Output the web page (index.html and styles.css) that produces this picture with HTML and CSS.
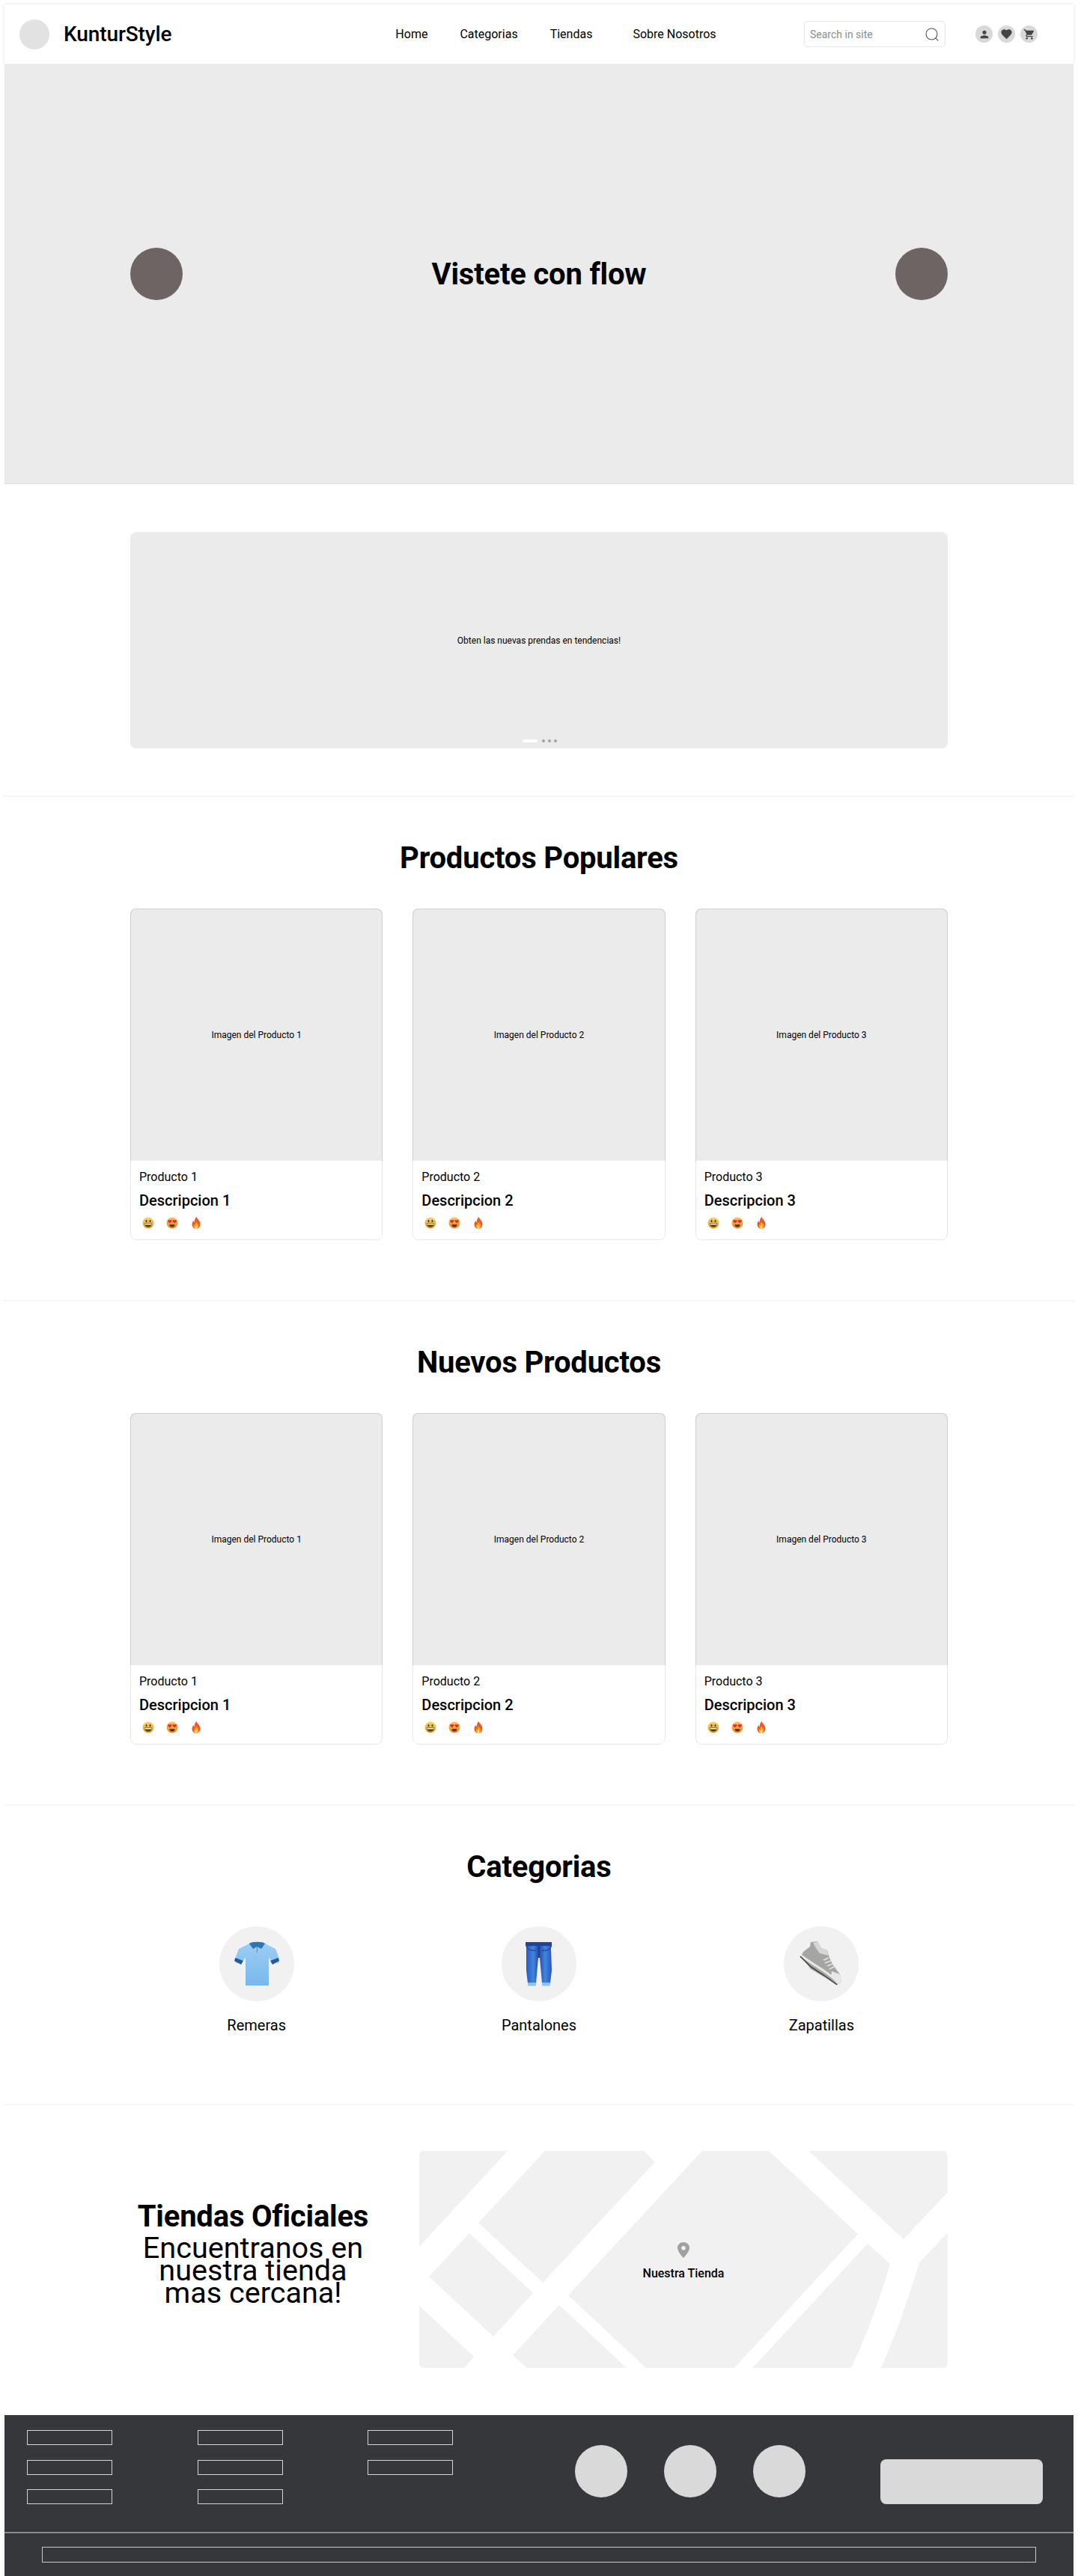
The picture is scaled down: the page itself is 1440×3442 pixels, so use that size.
FILE: index.html
```html
<!DOCTYPE html>
<html lang="es">
<head>
    <meta charset="UTF-8">
    <meta name="viewport" content="width=device-width, initial-scale=1.0">
    <title>KunturStyle</title>
    <link rel="stylesheet" href="styles.css">
</head>
<body>
    <!-- emoji used by the product cards -->
    <svg class="sprites" width="0" height="0" aria-hidden="true">
        <defs>
            <linearGradient id="emojiYellow" x1="0" y1="0" x2="0" y2="1">
                <stop offset="0" stop-color="#f8d568"/>
                <stop offset="1" stop-color="#dc9a25"/>
            </linearGradient>
            <linearGradient id="emojiOrange" x1="0" y1="0" x2="0" y2="1">
                <stop offset="0" stop-color="#f9c850"/>
                <stop offset="1" stop-color="#e5842a"/>
            </linearGradient>
            <symbol id="emojiSmile" viewBox="0 0 16 16">
                <circle cx="8" cy="8" r="7.5" fill="url(#emojiYellow)"/>
                <ellipse cx="5.5" cy="5.6" rx="1" ry="1.6" fill="#4a3210"/>
                <ellipse cx="10.5" cy="5.6" rx="1" ry="1.6" fill="#4a3210"/>
                <path d="M3 8.6h10c0 3-2.2 5-5 5s-5-2-5-5z" fill="#5a3a12"/>
                <path d="M3.6 9h8.8v1.5H3.6z" fill="#fff"/>
            </symbol>
            <symbol id="emojiLove" viewBox="0 0 16 16">
                <circle cx="8" cy="8" r="7.5" fill="url(#emojiOrange)"/>
                <path d="M4.8 8.4L2.4 6.100c-1-1.200.7-2.900 2.400-1.400 1.700-1.500 3.400.2 2.400 1.400z" fill="#e2262b"/>
                <path d="M11.200 8.400L8.800 6.100c-1-1.200.7-2.900 2.400-1.400 1.700-1.500 3.400.2 2.400 1.400z" fill="#e2262b"/>
                <path d="M4.500 10.200h7c0 2-1.500 3.300-3.500 3.300s-3.500-1.300-3.500-3.300z" fill="#5a2a10"/>
            </symbol>
            <symbol id="emojiFire" viewBox="0 0 16 16">
                <path d="M8.500 0c.6 2.800 4.900 4.900 5 9.400C13.500 13 11 16 8 16s-5.500-2.800-5.500-6.200c0-2 1-3.600 2-4.800.1 1.200.5 2 1.200 2.500C5.600 4.800 6.500 1.800 8.500 0z" fill="#ee5a24"/>
                <path d="M8.300 6.500c.3 1.800 3 3 3 5.800 0 2.100-1.500 3.700-3.300 3.700s-3.200-1.500-3.200-3.500c0-1.300.6-2.300 1.300-3 .1.600.4 1 .8 1.200-.2-1.500.3-3.100 1.400-4.200z" fill="#f9a825"/>
                <path d="M8 11c.2 1 1.400 1.500 1.400 2.900 0 1.100-.6 2.100-1.400 2.100s-1.500-.9-1.500-2c0-1.300 1.100-1.800 1.500-3z" fill="#fde08a"/>
            </symbol>
        </defs>
    </svg>

    <div class="page">
        <header class="navbar">
            <div class="logo-dot"></div>
            <div class="brand">KunturStyle</div>
            <nav class="nav-links">
                <a href="#">Home</a>
                <a href="#">Categorias</a>
                <a href="#">Tiendas</a>
                <a href="#" class="nav-about">Sobre Nosotros</a>
            </nav>
            <div class="search-box">
                <span class="search-text">Search in site</span>
                <svg class="search-icon" viewBox="0 0 18 18" width="18" height="18" fill="none" stroke="#555" stroke-width="1.1">
                    <circle cx="8.500" cy="8.500" r="7.500"/>
                    <path d="M13.800 13.800l3.500 3.500"/>
                </svg>
            </div>
            <div class="nav-icons">
                <span class="nav-icon">
                    <svg viewBox="0 0 24 24" width="16" height="16"><path d="M12 12c2.210 0 4-1.790 4-4s-1.790-4-4-4-4 1.790-4 4 1.790 4 4 4zm0 2c-2.670 0-8 1.340-8 4v2h16v-2c0-2.660-5.330-4-8-4z"/></svg>
                </span>
                <span class="nav-icon">
                    <svg viewBox="0 0 24 24" width="17" height="17"><path d="M12 21.350l-1.450-1.320C5.400 15.360 2 12.280 2 8.500 2 5.420 4.420 3 7.500 3c1.740 0 3.410.81 4.500 2.090C13.090 3.810 14.760 3 16.500 3 19.580 3 22 5.420 22 8.500c0 3.780-3.400 6.860-8.550 11.540L12 21.350z"/></svg>
                </span>
                <span class="nav-icon">
                    <svg viewBox="0 0 24 24" width="16" height="16"><path d="M7 18c-1.100 0-1.990.9-1.990 2S5.900 22 7 22s2-.9 2-2-.9-2-2-2zM1 2v2h2l3.600 7.590-1.350 2.450c-.16.28-.25.61-.25.96 0 1.100.9 2 2 2h12v-2H7.420c-.14 0-.25-.11-.25-.25l.03-.12.9-1.630h7.450c.75 0 1.410-.41 1.750-1.030l3.580-6.490c.08-.14.12-.31.12-.48 0-.55-.45-1-1-1H5.210l-.94-2H1zm16 16c-1.100 0-1.990.9-1.990 2s.89 2 1.990 2 2-.9 2-2-.9-2-2-2z"/></svg>
                </span>
            </div>
        </header>

        <section class="hero">
            <span class="hero-arrow"></span>
            <h1 class="hero-title">Vistete con flow</h1>
            <span class="hero-arrow"></span>
        </section>

        <section class="promo">
            <div class="promo-banner">
                <p>Obten las nuevas prendas en tendencias!</p>
                <div class="promo-dots">
                    <span class="dot-active"></span>
                    <span class="dot"></span>
                    <span class="dot"></span>
                    <span class="dot"></span>
                </div>
            </div>
        </section>

        <section class="block">
            <h2 class="block-title">Productos Populares</h2>
            <div class="card-grid">
                <article class="card">
                    <div class="card-image">Imagen del Producto 1</div>
                    <div class="card-body">
                        <p class="card-name">Producto 1</p>
                        <p class="card-desc">Descripcion 1</p>
                        <div class="card-emoji">
                            <svg><use href="#emojiSmile"/></svg>
                            <svg><use href="#emojiLove"/></svg>
                            <svg><use href="#emojiFire"/></svg>
                        </div>
                    </div>
                </article>
                <article class="card">
                    <div class="card-image">Imagen del Producto 2</div>
                    <div class="card-body">
                        <p class="card-name">Producto 2</p>
                        <p class="card-desc">Descripcion 2</p>
                        <div class="card-emoji">
                            <svg><use href="#emojiSmile"/></svg>
                            <svg><use href="#emojiLove"/></svg>
                            <svg><use href="#emojiFire"/></svg>
                        </div>
                    </div>
                </article>
                <article class="card">
                    <div class="card-image">Imagen del Producto 3</div>
                    <div class="card-body">
                        <p class="card-name">Producto 3</p>
                        <p class="card-desc">Descripcion 3</p>
                        <div class="card-emoji">
                            <svg><use href="#emojiSmile"/></svg>
                            <svg><use href="#emojiLove"/></svg>
                            <svg><use href="#emojiFire"/></svg>
                        </div>
                    </div>
                </article>
            </div>
        </section>

        <section class="block">
            <h2 class="block-title">Nuevos Productos</h2>
            <div class="card-grid">
                <article class="card">
                    <div class="card-image">Imagen del Producto 1</div>
                    <div class="card-body">
                        <p class="card-name">Producto 1</p>
                        <p class="card-desc">Descripcion 1</p>
                        <div class="card-emoji">
                            <svg><use href="#emojiSmile"/></svg>
                            <svg><use href="#emojiLove"/></svg>
                            <svg><use href="#emojiFire"/></svg>
                        </div>
                    </div>
                </article>
                <article class="card">
                    <div class="card-image">Imagen del Producto 2</div>
                    <div class="card-body">
                        <p class="card-name">Producto 2</p>
                        <p class="card-desc">Descripcion 2</p>
                        <div class="card-emoji">
                            <svg><use href="#emojiSmile"/></svg>
                            <svg><use href="#emojiLove"/></svg>
                            <svg><use href="#emojiFire"/></svg>
                        </div>
                    </div>
                </article>
                <article class="card">
                    <div class="card-image">Imagen del Producto 3</div>
                    <div class="card-body">
                        <p class="card-name">Producto 3</p>
                        <p class="card-desc">Descripcion 3</p>
                        <div class="card-emoji">
                            <svg><use href="#emojiSmile"/></svg>
                            <svg><use href="#emojiLove"/></svg>
                            <svg><use href="#emojiFire"/></svg>
                        </div>
                    </div>
                </article>
            </div>
        </section>

        <section class="block block-categories">
            <h2 class="block-title">Categorias</h2>
            <div class="card-grid">
                <div class="category">
                    <div class="category-circle">
                        <svg viewBox="0 0 60 60" width="60" height="60">
                            <defs>
                                <linearGradient id="shirtBody" x1="0" y1="0" x2="0" y2="1">
                                    <stop offset="0" stop-color="#9bcdf3"/>
                                    <stop offset="1" stop-color="#78b8ec"/>
                                </linearGradient>
                            </defs>
                            <path d="M20 3L6 10 0 26l3 3 9-3 3-5v38h31V21l3 5 9 3 3-3-6-16L41 3z" fill="url(#shirtBody)"/>
                            <path d="M1.500 22L0 26l9 5 3-5z" fill="#1f5c9e"/>
                            <path d="M58.500 22L60 26l-9 5-3-5z" fill="#1f5c9e"/>
                            <path d="M20 3c2-3 19-3 21 0l-5 7-5.500-3-5.500 3z" fill="#2a74b8"/>
                            <path d="M30.500 7v8" stroke="#4d8fc9" stroke-width="1"/>
                        </svg>
                    </div>
                    <p class="category-name">Remeras</p>
                </div>
                <div class="category">
                    <div class="category-circle">
                        <svg viewBox="0 0 60 60" width="60" height="60">
                            <defs>
                                <linearGradient id="jeansBody" x1="0" y1="0" x2="1" y2="0">
                                    <stop offset="0" stop-color="#2a55c0"/>
                                    <stop offset=".3" stop-color="#3f86dc"/>
                                    <stop offset=".5" stop-color="#2448a8"/>
                                    <stop offset=".75" stop-color="#3f86dc"/>
                                    <stop offset="1" stop-color="#2a55c0"/>
                                </linearGradient>
                            </defs>
                            <path d="M12 1h35l-1 8 1 30-2 17H34l-3-34h-2l-3 34H15l-2-17 0-30z" fill="url(#jeansBody)"/>
                            <path d="M12 1h35v5H12z" fill="#27419a"/>
                            <path d="M15 55h11l-.3 4.500H15.400z" fill="#8ec2ea"/>
                            <path d="M34 55h11l-.5 4.500H34.300z" fill="#8ec2ea"/>
                            <path d="M13 6c3 6 8 7 13 6M47 6c-3 6-8 7-13 6M30 6v15" fill="none" stroke="#1c2f7c" stroke-width="1"/>
                        </svg>
                    </div>
                    <p class="category-name">Pantalones</p>
                </div>
                <div class="category">
                    <div class="category-circle">
                        <svg viewBox="17 18 60 60" width="60" height="60">
                            <path d="M33 19l9-1 5 9 8 3 3 10 5 10 9 12 2 10-6 4-18-11-17-10-13-17 3-6 9-7z" fill="#a5a5a3"/>
                            <path d="M36 20l6-2 5 9 8 3 2 7-12-3-5-7z" fill="#d6d6d4"/>
                            <path d="M61 58l11 4 2 10-5 3-9-9z" fill="#e8e8e6"/>
                            <path d="M20 37l13 9 17 11 18 13" fill="none" stroke="#e8e8e6" stroke-width="3"/>
                            <path d="M19 38l14 14 17 11 18 13" fill="none" stroke="#3b3b3b" stroke-width="1.500"/>
                            <path d="M50 43l7-3M52 47l8-3M55 51l7-3M58 55l6-3" stroke="#e6e6e4" stroke-width="1.500"/>
                        </svg>
                    </div>
                    <p class="category-name">Zapatillas</p>
                </div>
            </div>
        </section>

        <section class="stores">
            <div class="stores-text">
                <h2 class="stores-title">Tiendas Oficiales</h2>
                <p class="stores-sub">Encuentranos en nuestra tienda mas cercana!</p>
            </div>
            <div class="map">
                <svg class="map-roads" viewBox="0 0 706 290" width="706" height="290">
                    <path d="M0 0H118L0 128z"/>
                    <path d="M168 0H300L315 15 165 176 79 96z"/>
                    <path d="M378 0H467L586 111 421 290H303L199 193z"/>
                    <path d="M520 0H706V55L647 118z"/>
                    <path d="M67 110L152 190 99 248 13 168z"/>
                    <path d="M0 207L73 275 60 290H0z"/>
                    <path d="M187 206L277 290H144L125 273z"/>
                    <path d="M599 124L629 151Q607 227 577 290H445z"/>
                    <path d="M706 109L668 149Q646 224 617 290H706z"/>
                </svg>
                <div class="map-label">
                    <svg viewBox="0 0 16 21" width="16" height="21"><path fill-rule="evenodd" d="M8 0c4.400 0 8 3.300 8 7.500C16 12 11 18 8 21 5 18 0 12 0 7.500 0 3.300 3.600 0 8 0zm0 5a2.800 2.800 0 1 0 0 5.600A2.800 2.800 0 0 0 8 5z" fill="#a0a0a0"/></svg>
                    <span>Nuestra Tienda</span>
                </div>
            </div>
        </section>

        <footer class="footer">
            <div class="footer-main">
                <div class="footer-links">
                    <span class="footer-box"></span>
                    <span class="footer-box"></span>
                    <span class="footer-box"></span>
                    <span class="footer-box"></span>
                    <span class="footer-box"></span>
                    <span class="footer-box"></span>
                    <span class="footer-box"></span>
                    <span class="footer-box"></span>
                </div>
                <div class="footer-socials">
                    <span></span>
                    <span></span>
                    <span></span>
                </div>
                <div class="footer-button"></div>
            </div>
            <div class="footer-bottom">
                <div class="footer-legal"></div>
            </div>
        </footer>
    </div>
</body>
</html>
```

FILE: styles.css
```css
* {
    box-sizing: border-box;
}

body {
    margin: 0;
    background-color: #fff;
    color: #000;
    font-family: 'Roboto', sans-serif;
}

p, h1, h2 {
    margin: 0;
}

.sprites {
    position: absolute;
}

.page {
    padding: 6px 6px 1px;
}

/* Top bar */
.navbar {
    display: flex;
    align-items: center;
    height: 79px;
    padding: 0 48px 0 20px;
    background-color: #fff;
    box-shadow: 0 0 4px rgba(0, 0, 0, 0.12);
}

.logo-dot {
    width: 40px;
    height: 40px;
    margin-right: 19px;
    border-radius: 50%;
    background-color: #e2e2e2;
}

.brand {
    font-size: 28px;
    font-weight: 500;
    letter-spacing: -0.1px;
}

.nav-links {
    display: flex;
    gap: 43px;
    margin-left: 299px;
    font-size: 16px;
}

.nav-links a {
    color: #000;
    text-decoration: none;
}

.nav-about {
    margin-left: 11px;
}

.search-box {
    display: flex;
    align-items: center;
    justify-content: space-between;
    width: 189px;
    height: 35px;
    margin-left: auto;
    padding: 0 8px 0 7px;
    border: 1px solid #e6e6e6;
    border-radius: 5px;
}

.search-text {
    font-size: 14px;
    color: #8e8e8e;
}

.nav-icons {
    display: flex;
    gap: 7px;
    margin-left: 40px;
}

.nav-icon {
    display: flex;
    align-items: center;
    justify-content: center;
    width: 23px;
    height: 23px;
    border-radius: 50%;
    background-color: #d9d9d9;
    fill: #444;
}

/* Hero */
.hero {
    display: flex;
    align-items: center;
    justify-content: space-between;
    height: 562px;
    padding: 0 168px;
    background-color: #ebebeb;
    border-bottom: 1px solid #e2e2e2;
}

.hero-arrow {
    width: 70px;
    height: 70px;
    border-radius: 50%;
    background-color: #6e6464;
}

.hero-title {
    padding-top: 2px;
    font-size: 40px;
    font-weight: 700;
    letter-spacing: -0.2px;
}

/* Promo banner */
.promo {
    padding: 64px 168px 63px;
}

.promo-banner {
    position: relative;
    display: flex;
    align-items: center;
    justify-content: center;
    height: 289px;
    border-radius: 8px;
    background-color: #ebebeb;
    font-size: 12px;
}

.promo-dots {
    position: absolute;
    left: 524px;
    bottom: 8px;
    display: flex;
    align-items: center;
    gap: 4px;
}

.dot-active {
    width: 20px;
    height: 4px;
    margin-right: 2px;
    border-radius: 2px;
    background-color: #fff;
}

.dot {
    width: 4px;
    height: 4px;
    border-radius: 50%;
    background-color: #a3a3a3;
}

/* Product and category blocks */
.block {
    height: 674px;
    padding: 58px 168px 0;
    border-top: 2px solid #f5f5f5;
}

.block-categories {
    height: 400px;
}

.block-title {
    margin-bottom: 43px;
    font-size: 40px;
    font-weight: 700;
    line-height: 48px;
    letter-spacing: -0.2px;
    text-align: center;
}

.block-categories .block-title {
    margin-bottom: 55px;
}

.card-grid {
    display: grid;
    grid-template-columns: repeat(3, 1fr);
    gap: 40px;
}

.card {
    height: 443px;
    border: 1px solid #e8e8e8;
    border-radius: 8px;
}

.card-image {
    display: flex;
    align-items: center;
    justify-content: center;
    height: 337px;
    margin: -1px -1px 0;
    background-color: #ebebeb;
    border: 1px solid #cfcfcf;
    border-bottom: none;
    border-radius: 8px 8px 0 0;
    font-size: 12px;
}

.card-body {
    padding: 12px 11px 0;
}

.card-name {
    font-size: 16px;
    line-height: 20px;
}

.card-desc {
    margin-top: 9px;
    font-size: 20px;
    font-weight: 500;
    line-height: 24px;
}

.card-emoji {
    display: flex;
    gap: 16px;
    margin-top: 10px;
    padding-left: 4px;
}

.card-emoji svg {
    width: 16px;
    height: 16px;
}

.category {
    display: flex;
    flex-direction: column;
    align-items: center;
}

.category-circle {
    display: flex;
    align-items: center;
    justify-content: center;
    width: 100px;
    height: 100px;
    border-radius: 50%;
    background-color: #f1f1f1;
}

.category-name {
    margin-top: 20px;
    font-size: 20px;
    line-height: 24px;
}

/* Stores */
.stores {
    display: flex;
    align-items: center;
    gap: 58px;
    padding: 61px 168px 63px;
    border-top: 2px solid #f5f5f5;
}

.stores-text {
    width: 328px;
    padding-bottom: 21px;
    text-align: center;
}

.stores-title {
    font-size: 40px;
    font-weight: 700;
    line-height: 48px;
    letter-spacing: -0.2px;
}

.stores-sub {
    margin-top: 3px;
    padding: 0 12px;
    font-size: 39.6px;
    line-height: 30px;
}

.map {
    position: relative;
    flex: 1;
    height: 290px;
    border-radius: 6px;
    overflow: hidden;
}

.map-roads {
    display: block;
    width: 100%;
    height: 100%;
    fill: #f1f1f1;
}

.map-label {
    position: absolute;
    left: 0;
    right: 0;
    top: 122px;
    display: flex;
    flex-direction: column;
    align-items: center;
    gap: 11px;
    font-size: 16px;
    font-weight: 500;
    line-height: 20px;
}

/* Footer */
.footer {
    background-color: #36373b;
}

.footer-main {
    display: flex;
    align-items: flex-start;
    height: 158px;
    padding: 20px 0 0 30px;
    border-bottom: 2px solid #8a8b8d;
}

.footer-links {
    display: grid;
    grid-template-columns: repeat(3, 114px);
    column-gap: 113.5px;
    row-gap: 19.5px;
    width: 569px;
}

.footer-box {
    height: 20px;
    border: 1px solid #d5d5d5;
}

.footer-socials {
    display: flex;
    gap: 49px;
    margin: 20px 0 0 163px;
}

.footer-socials span {
    width: 70px;
    height: 70px;
    border-radius: 50%;
    background-color: #d9d9d9;
}

.footer-button {
    width: 217px;
    height: 60px;
    margin: 39px 0 0 100px;
    border-radius: 8px;
    background-color: #d9d9d9;
}

.footer-bottom {
    padding: 18px 50px 18px;
}

.footer-legal {
    height: 21px;
    border: 1px solid #c8c8c8;
}
```
